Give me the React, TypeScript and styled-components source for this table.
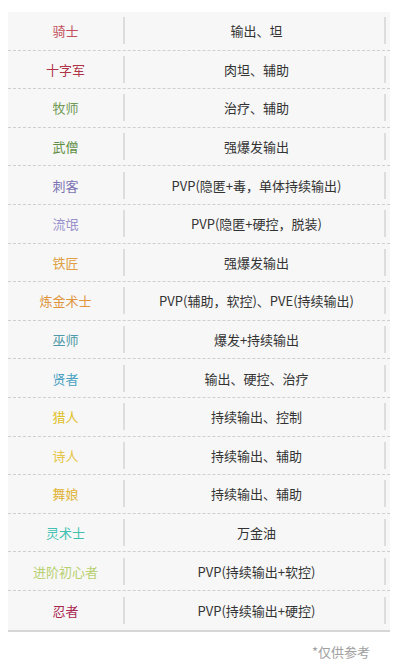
import React from 'react';
import styled, { createGlobalStyle } from 'styled-components';

const GlobalStyle = createGlobalStyle`
  html, body {
    margin: 0;
    padding: 0;
    background: #ffffff;
  }
  body {
    font-family: "Noto Sans CJK SC", "Liberation Sans", sans-serif;
  }
`;

const Page = styled.div`
  width: 400px;
  height: 666px;
  padding-top: 12px;
  box-sizing: border-box;
`;

const Table = styled.div`
  margin-left: 8px;
  width: 382px;
  background: #f7f7f7;
  border-bottom: 2px solid #d6d6d6;
`;

const Row = styled.div<{ last?: boolean }>`
  display: flex;
  align-items: center;
  height: 38.6px;
  box-sizing: border-box;
  border-bottom: ${({ last }) => (last ? 'none' : '1px dashed #cfcfcf')};
  padding-right: 4px;
`;

const NameCell = styled.div<{ color: string }>`
  width: 115px;
  text-align: center;
  font-size: 13px;
  color: ${({ color }) => color};
`;

const DescCell = styled.div`
  flex: 1;
  text-align: center;
  font-size: 13px;
  color: #333333;
  padding-left: 4px;
`;

const Divider = styled.span`
  width: 2px;
  height: 27px;
  background: #dddddd;
`;

const Note = styled.div`
  margin-top: 10px;
  padding-right: 30px;
  text-align: right;
  font-size: 13px;
  color: #a0a0a0;
`;

const rows = [
  { name: '骑士', color: '#c0505a', desc: '输出、坦' },
  { name: '十字军', color: '#b03448', desc: '肉坦、辅助' },
  { name: '牧师', color: '#6f9a55', desc: '治疗、辅助' },
  { name: '武僧', color: '#5f8f45', desc: '强爆发输出' },
  { name: '刺客', color: '#7a72b2', desc: 'PVP(隐匿+毒，单体持续输出)' },
  { name: '流氓', color: '#9a92cc', desc: 'PVP(隐匿+硬控，脱装)' },
  { name: '铁匠', color: '#e0a045', desc: '强爆发输出' },
  { name: '炼金术士', color: '#e0953e', desc: 'PVP(辅助，软控)、PVE(持续输出)' },
  { name: '巫师', color: '#4f9aa8', desc: '爆发+持续输出' },
  { name: '贤者', color: '#4aa2c2', desc: '输出、硬控、治疗' },
  { name: '猎人', color: '#e0c025', desc: '持续输出、控制' },
  { name: '诗人', color: '#e6c545', desc: '持续输出、辅助' },
  { name: '舞娘', color: '#e0b232', desc: '持续输出、辅助' },
  { name: '灵术士', color: '#40c0b0', desc: '万金油' },
  { name: '进阶初心者', color: '#b8d070', desc: 'PVP(持续输出+软控)' },
  { name: '忍者', color: '#a82850', desc: 'PVP(持续输出+硬控)' },
];

export default function App() {
  return (
    <Page>
      <GlobalStyle />
      <Table>
        {rows.map((r, i) => (
          <Row key={r.name} last={i === rows.length - 1}>
            <NameCell color={r.color}>{r.name}</NameCell>
            <Divider />
            <DescCell>{r.desc}</DescCell>
            <Divider />
          </Row>
        ))}
      </Table>
      <Note>*仅供参考</Note>
    </Page>
  );
}
